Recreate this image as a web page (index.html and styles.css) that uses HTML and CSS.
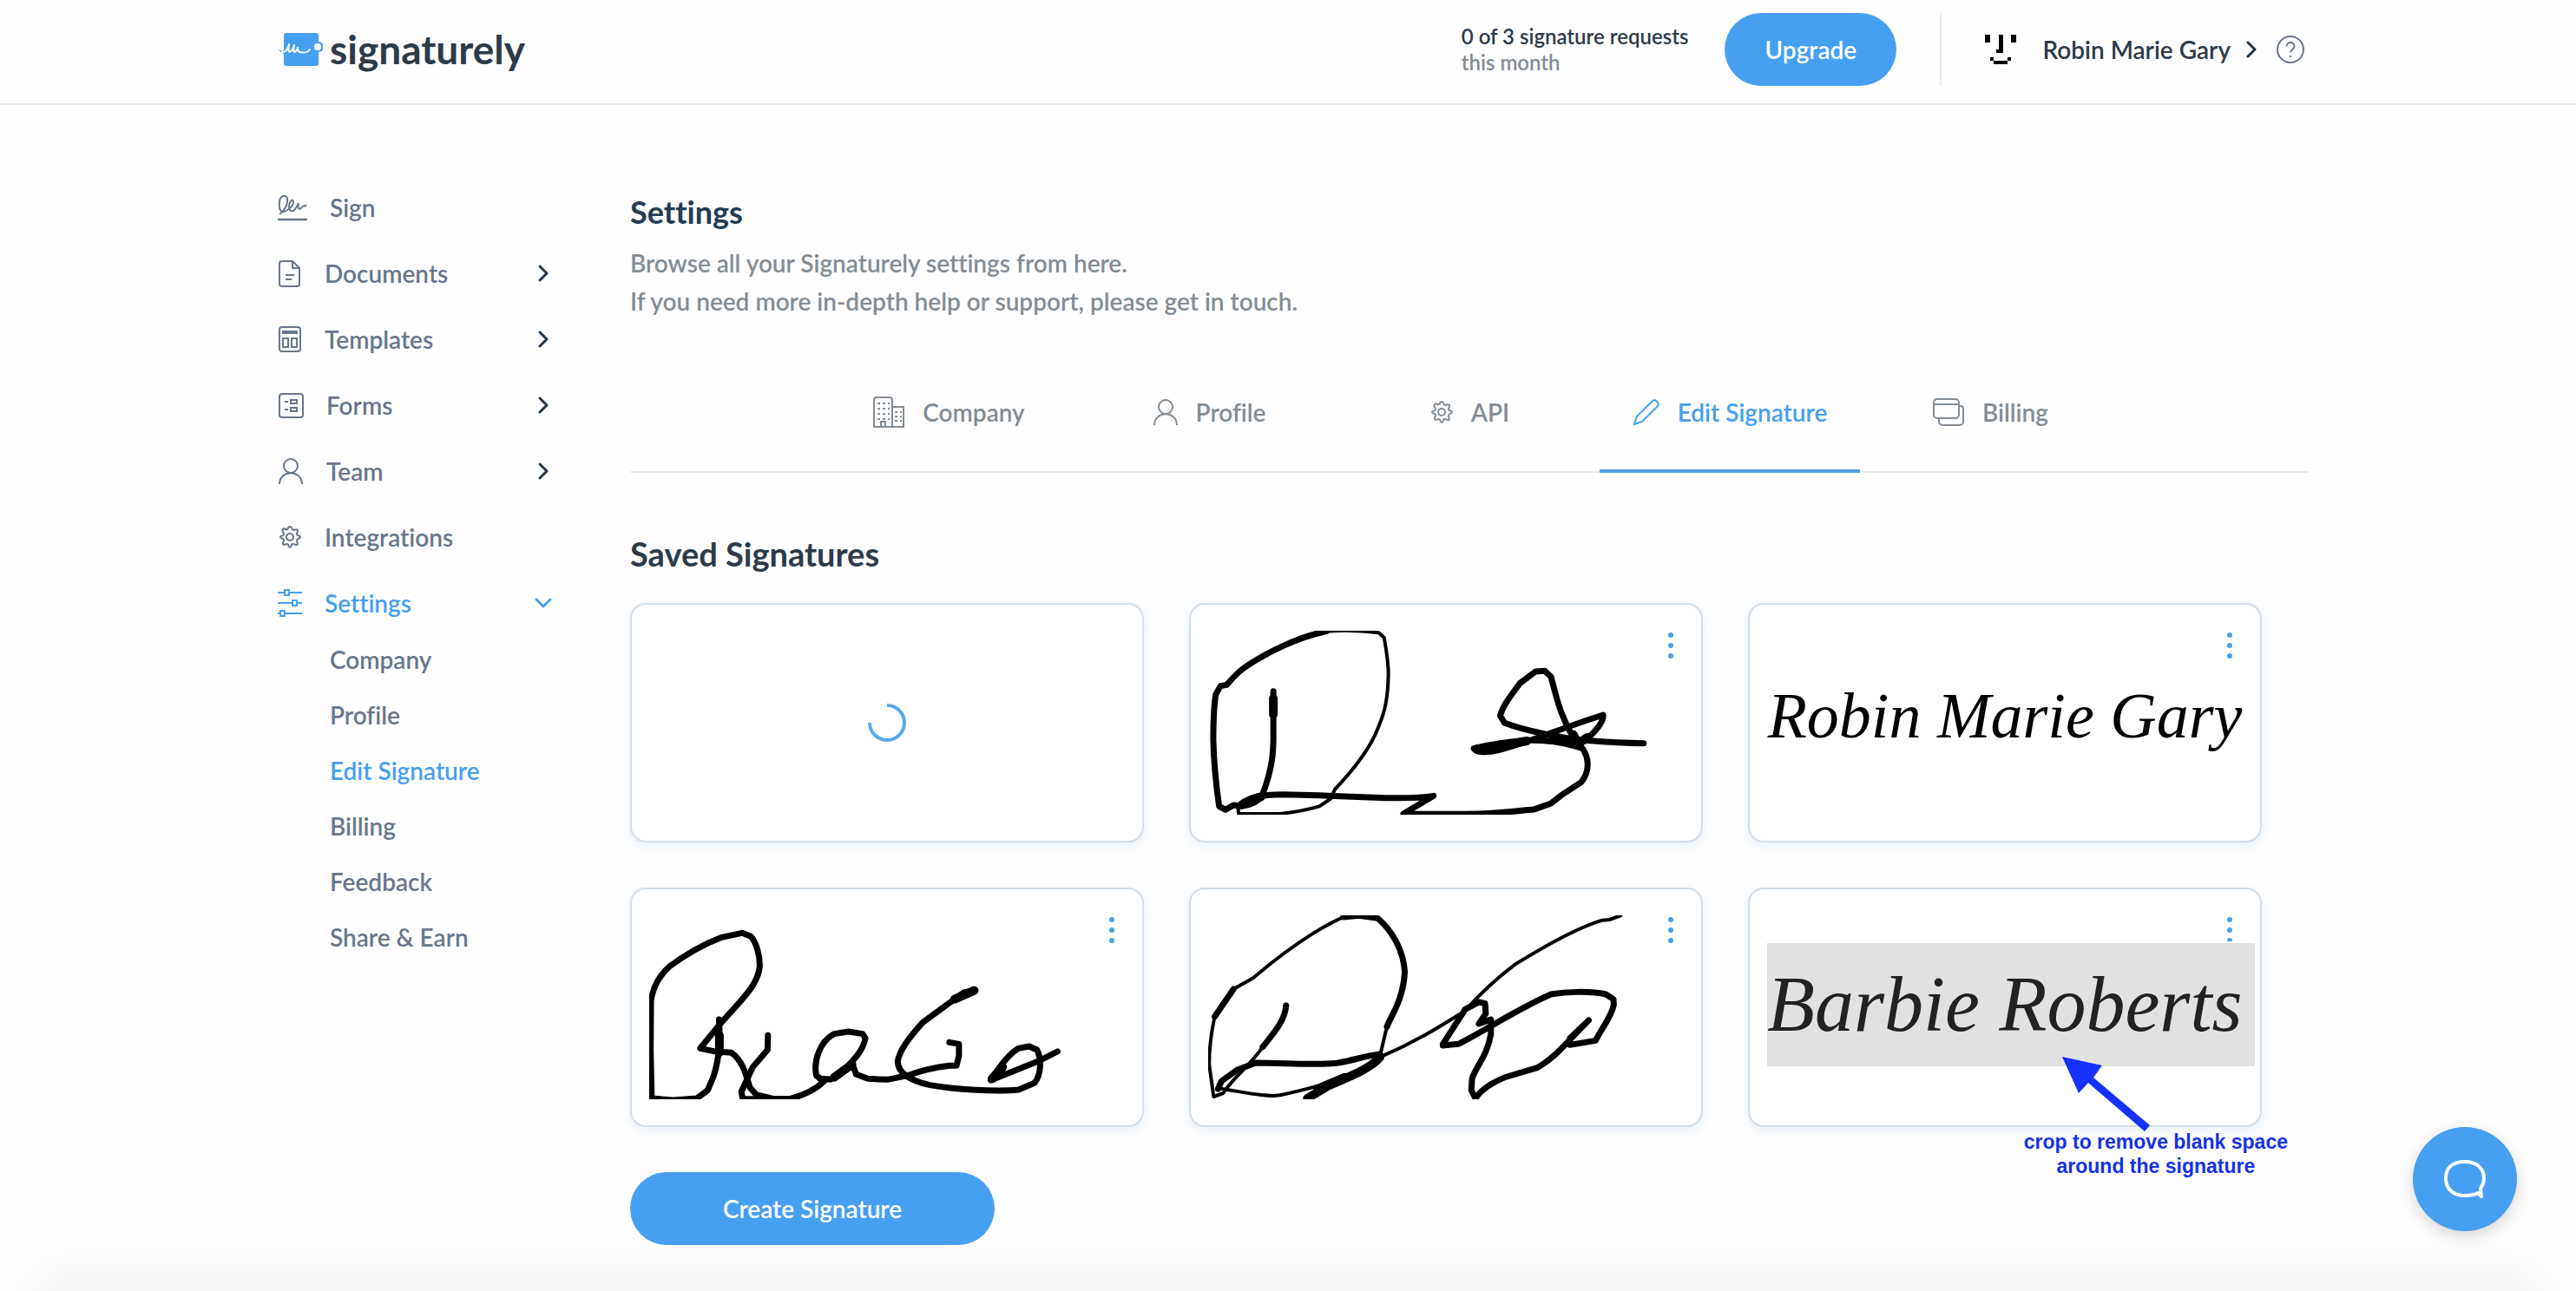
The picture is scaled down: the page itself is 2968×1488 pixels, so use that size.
FILE: index.html
```html
<!DOCTYPE html>
<html lang="en">
<head>
    <meta charset="UTF-8">
    <meta name="viewport" content="width=device-width, initial-scale=1.0">
    <title>Signaturely - Edit Signature</title>
    <link rel="stylesheet" href="styles.css">
</head>
<body>
    <header class="header">
        <div class="container header-inner">
            <a href="#" class="logo">
                <svg width="52" height="40" viewBox="0 0 52 40" fill="none">
                    <path fill="#479ff2" d="M10 1h34a3 3 0 0 1 3 3v7a6 6 0 1 1 0 12v13a3 3 0 0 1-3 3H10a3 3 0 0 1-3-3V25C4 24 2 22 0 19c3 3 5 3 7 2V4a3 3 0 0 1 3-3z"/>
                    <circle cx="46" cy="17" r="4" fill="#fff"/>
                    <path stroke="#fff" stroke-width="2" stroke-linecap="round" stroke-linejoin="round" d="M5 23c5 0 7-4 8-9-1 5-1 8 1 9 2-1 4-4 5-8-1 4-1 8 1 8 2-1 2-3 3-5 0 3 1 5 3 5 3 1 8 1 11-3"/>
                </svg>
                <span>signaturely</span>
            </a>
            <div class="header-right">
                <p class="requests">0 of 3 signature requests<br><span>this month</span></p>
                <button type="button" class="btn btn-upgrade">Upgrade</button>
                <button type="button" class="user-menu">
                    <svg class="avatar" width="36" height="36" viewBox="0 0 36 36" fill="#000">
                        <path d="M0 1h6v9H0zM30 1h6v9h-6zM16 1h5v21h-8v-4h3zM6 27h4v4h16v-4h4v4h-4v4H10v-4H6z"/>
                    </svg>
                    <span>Robin Marie Gary</span>
                    <svg width="12" height="20" viewBox="0 0 12 20" class="chevron"><path d="M2 2l8 8-8 8"/></svg>
                </button>
                <a href="#" class="help" aria-label="Help">
                    <svg width="34" height="34" viewBox="0 0 34 34" class="line-icon">
                        <circle cx="17" cy="17" r="15"/>
                        <path d="M12.500 13.500c0-6 9-6 9 0 0 3.500-4.500 3.500-4.500 7M17 24v2"/>
                    </svg>
                </a>
            </div>
        </div>
    </header>

    <div class="container layout">
        <aside class="sidebar">
            <ul class="menu">
                <li><a href="#">
                    <svg width="34" height="32" viewBox="0 0 34 32" class="line-icon"><path d="M0 30h34" stroke-width="2.500"/><path d="M2 24C8 20 12 12 11 6c-1-5-8-4-9 3-1 8 1 13 5 12 5-1 12-8 11-12-1-3-5 0-5 6 0 4 2 6 5 5 3-2 5-7 6-9-1 5 0 7 1 7 3-1 4-4 5-4s1 2 3-1"/></svg>
                    <span>Sign</span>
                </a></li>
                <li><a href="#">
                    <svg width="28" height="32" viewBox="0 0 28 32" class="line-icon"><path d="M5 2h12l8 8v18a3 3 0 0 1-3 3H5a3 3 0 0 1-3-3V5a3 3 0 0 1 3-3zM17 2v8h8M9 18h10M9 23h7"/></svg>
                    <span>Documents</span>
                    <svg width="12" height="20" viewBox="0 0 12 20" class="chevron"><path d="M2 2l8 8-8 8"/></svg>
                </a></li>
                <li><a href="#">
                    <svg width="28" height="32" viewBox="0 0 28 32" class="line-icon"><rect x="2" y="2" width="24" height="28" rx="3"/><path d="M5 8h18" stroke-width="4"/><path d="M6 15h6v10H6zM16 15h6v10h-6z"/></svg>
                    <span>Templates</span>
                    <svg width="12" height="20" viewBox="0 0 12 20" class="chevron"><path d="M2 2l8 8-8 8"/></svg>
                </a></li>
                <li><a href="#">
                    <svg width="30" height="32" viewBox="0 0 30 32" class="line-icon"><rect x="2" y="3" width="27" height="27" rx="3"/><path d="M8 12h4M8 21h4M15 10h7v4h-7zM15 19h7v4h-7z"/></svg>
                    <span>Forms</span>
                    <svg width="12" height="20" viewBox="0 0 12 20" class="chevron"><path d="M2 2l8 8-8 8"/></svg>
                </a></li>
                <li><a href="#">
                    <svg width="30" height="32" viewBox="0 0 30 32" class="line-icon"><circle cx="15" cy="10" r="8"/><path d="M2 31c0-17 26-17 26 0"/></svg>
                    <span>Team</span>
                    <svg width="12" height="20" viewBox="0 0 12 20" class="chevron"><path d="M2 2l8 8-8 8"/></svg>
                </a></li>
                <li><a href="#">
                    <svg width="28" height="28" viewBox="0 0 28 28" class="line-icon"><circle cx="14" cy="14" r="4"/><path d="M14 2c3 0 2 4 4 4s4-2 5 0-2 3-1 5 4 1 4 3-4 1-4 4 2 4 0 5-3-2-5-1-1 4-3 4-1-4-3-4-4 2-5 0 2-3 1-5-4-1-4-3 4-1 4-3-3-4-1-6 3 1 5 0 0-3 3-3z"/></svg>
                    <span>Integrations</span>
                </a></li>
                <li class="active"><a href="#">
                    <svg width="28" height="32" viewBox="0 0 28 32" class="line-icon"><path d="M0 4h7M14 4h14M0 16h16M23 16h5M0 28h3M9 28h19M8 1h5v6H8zM17 13h5v6h-5zM3 25h5v6H3z"/></svg>
                    <span>Settings</span>
                    <svg width="20" height="12" viewBox="0 0 20 12" class="chevron"><path d="M2 2l8 8 8-8"/></svg>
                </a></li>
            </ul>
            <ul class="submenu">
                <li><a href="#">Company</a></li>
                <li><a href="#">Profile</a></li>
                <li class="active"><a href="#">Edit Signature</a></li>
                <li><a href="#">Billing</a></li>
                <li><a href="#">Feedback</a></li>
                <li><a href="#">Share &amp; Earn</a></li>
            </ul>
        </aside>

        <main class="content">
            <h1>Settings</h1>
            <p class="intro">Browse all your Signaturely settings from here.<br>If you need more in-depth help or support, please get in touch.</p>

            <nav class="tabs">
                <a href="#">
                    <svg width="38" height="36" viewBox="0 0 38 36" class="line-icon"><path d="M2 35V4a3 3 0 0 1 3-3h15a3 3 0 0 1 3 3v31zM23 12h13v23H23M10 35v-6h5v6"/><path stroke-dasharray="3 3" d="M6 8h14M6 14h14M6 20h14M6 26h14M26 18h8M26 23h8M26 28h8"/></svg>
                    Company
                </a>
                <a href="#">
                    <svg width="30" height="32" viewBox="0 0 30 32" class="line-icon"><circle cx="15" cy="10" r="8"/><path d="M2 31c0-17 26-17 26 0"/></svg>
                    Profile
                </a>
                <a href="#">
                    <svg width="28" height="28" viewBox="0 0 28 28" class="line-icon"><circle cx="14" cy="14" r="4"/><path d="M14 2c3 0 2 4 4 4s4-2 5 0-2 3-1 5 4 1 4 3-4 1-4 4 2 4 0 5-3-2-5-1-1 4-3 4-1-4-3-4-4 2-5 0 2-3 1-5-4-1-4-3 4-1 4-3-3-4-1-6 3 1 5 0 0-3 3-3z"/></svg>
                    API
                </a>
                <a href="#" class="active">
                    <svg width="32" height="32" viewBox="0 0 32 32" class="line-icon"><path d="M2 30l3-9L23 3c3-3 9 3 6 6L11 27z"/></svg>
                    Edit Signature
                </a>
                <a href="#">
                    <svg width="38" height="34" viewBox="0 0 38 34" class="line-icon"><rect x="2" y="2" width="29" height="22" rx="4"/><path d="M2 8h29M31 10h2a3 3 0 0 1 3 3v15a4 4 0 0 1-4 4H12a4 4 0 0 1-4-4v-4"/></svg>
                    Billing
                </a>
            </nav>

            <h2>Saved Signatures</h2>
            <div class="signatures">
                <div class="card">
                    <svg class="spinner" width="44" height="44" viewBox="0 0 44 44"><path d="M22 2a20 20 0 1 1-20 20"/></svg>
                </div>
                <div class="card">
                    <svg class="drawing" viewBox="81 141 1386 636" preserveAspectRatio="none">
                        <path class="pen" d="M425 143C350 160 250 215 185 270C160 292 145 315 135 328L117 332L103 362C98 400 96 460 96 520C98 620 106 690 113 748L132 760L155 744L178 748C200 745 225 735 238 712C268 620 272 560 271 495V350"/>
                        <path class="pen thin" d="M425 143C480 138 530 140 578 148L594 165C600 210 608 260 606 300C604 400 590 440 568 500C540 570 490 640 450 690L438 722L405 748C370 760 320 770 290 774H170L168 755"/>
                        <path class="pen thick" d="M271 375V430M180 742C200 725 215 722 235 715M1145 500L1160 532L1185 510M865 550C900 555 950 535 1010 522"/>
                        <path class="pen" d="M180 745C200 715 230 708 300 707C400 710 520 715 600 719C650 720 700 720 738 712L650 774L830 775C920 775 980 765 1033 758L1080 738L1110 710L1168 665C1195 625 1190 580 1172 548C1130 530 1070 518 1010 520C950 525 900 535 855 548C860 565 900 562 930 553C1020 525 1130 470 1232 432C1235 455 1200 510 1160 532C1135 500 1110 430 1098 380L1080 300L1062 280L1035 282L990 322C960 370 940 400 932 435L945 460C1000 485 1100 510 1180 520C1230 525 1300 530 1350 530"/>
                    </svg>
                    <button type="button" class="dots" aria-label="Signature options"><i></i><i></i><i></i></button>
                </div>
                <div class="card">
                    <p class="typed typed-robin">Robin Marie Gary</p>
                    <button type="button" class="dots" aria-label="Signature options"><i></i><i></i><i></i></button>
                </div>
                <div class="card">
                    <svg class="drawing" viewBox="118 135 1342 636" preserveAspectRatio="none">
                        <path class="pen" d="M125 765L122 600L123 430C128 390 145 345 175 312C210 280 260 240 320 212L380 196L405 208C420 230 430 270 430 310C425 370 390 410 370 440L322 505L262 595L300 605L350 610C380 635 390 680 402 730L420 755L470 770H515C560 755 590 735 612 708L590 690C580 640 600 570 640 545L680 537L720 545L728 560C720 610 690 640 660 680L630 702L600 700"/>
                        <path class="pen" d="M315 495C318 560 318 620 300 690L283 740L252 768L185 774L125 768M453 550L452 600L410 660L378 745L382 770H515"/>
                        <path class="pen" d="M690 645L702 685L735 700L790 703L850 688C890 670 930 660 965 655H985L992 620V580L965 574"/>
                        <path class="pen" d="M1037 395L1005 402L890 505C850 560 825 600 819 640C820 680 850 705 910 722C980 738 1100 745 1160 738L1205 715C1225 685 1225 630 1212 600L1190 588L1160 595C1130 615 1100 670 1082 705L1215 640L1270 606"/>
                        <path class="pen thick" d="M316 550V610M690 650L640 695M1035 395L980 425M1085 700L1115 660L1100 690"/>
                    </svg>
                    <button type="button" class="dots" aria-label="Signature options"><i></i><i></i><i></i></button>
                </div>
                <div class="card">
                    <svg class="drawing" viewBox="81 135 1386 636" preserveAspectRatio="none">
                        <path class="pen thin" d="M475 141C400 180 330 240 265 300L212 352L155 390L100 485C90 540 84 600 84 650L97 762L125 750C150 700 200 660 240 590"/>
                        <path class="pen" d="M240 590C270 545 305 500 308 447M155 390L100 485M475 141L520 136L575 145C620 190 650 260 654 330C650 430 610 490 602 520M110 735L120 708L165 670L220 645C300 645 400 655 460 645C510 635 540 620 582 615"/>
                        <path class="pen thin" d="M602 520L582 620M110 733C180 745 250 765 290 757C360 740 480 700 520 680M582 625C680 575 750 525 830 465C870 410 920 355 975 305C1050 250 1150 180 1230 152L1250 150L1283 136"/>
                        <path class="pen thick" d="M582 625C560 660 500 690 430 725L370 768M400 735L480 695"/>
                        <path class="pen" d="M765 580L830 460L870 435L888 440L890 475L870 510L905 495V545C895 620 860 660 850 700L848 740L860 768C880 730 930 700 960 690L1040 662C1100 620 1120 580 1190 498L1135 560V583L1210 568C1230 520 1255 490 1263 445L1262 425L1240 408C1190 395 1120 400 1080 408C980 460 880 540 810 580L765 585"/>
                    </svg>
                    <button type="button" class="dots" aria-label="Signature options"><i></i><i></i><i></i></button>
                </div>
                <div class="card">
                    <button type="button" class="dots" aria-label="Signature options"><i></i><i></i><i></i></button>
                    <p class="typed typed-barbie">Barbie Roberts</p>
                    <div class="note">
                        <svg width="104" height="86" viewBox="0 0 104 86" fill="#1531fb">
                            <path d="M0 0L46 10L36 24L101 79L95 86L30 30L19 42z"/>
                        </svg>
                        <p>crop to remove blank space<br>around the signature</p>
                    </div>
                </div>
            </div>

            <button type="button" class="btn btn-create">Create Signature</button>
        </main>
    </div>

    <button type="button" class="chat" aria-label="Open chat">
        <svg width="52" height="48" viewBox="0 0 52 48"><path d="M41 40C36 43 31 43 26 43C12 43 4 35 4 23S12 4 26 4s22 8 22 19c0 5-2 9-4 12l1 9z"/></svg>
    </button>
    <div class="bottom-shade"></div>
</body>
</html>
```
FILE: styles.css
```css
* {
    margin: 0;
    padding: 0;
    box-sizing: border-box;
}

body {
    font-family: Lato, "Liberation Sans", sans-serif;
    font-size: 28px;
    font-weight: 600;
    font-variant-ligatures: none;
    line-height: 40px;
    color: #2d3a48;
    background: #fefefe;
    min-height: 100vh;
    overflow-x: hidden;
}

a {
    color: inherit;
    text-decoration: none;
}

ul {
    list-style: none;
}

button {
    font: inherit;
    color: inherit;
    border: none;
    background: none;
    cursor: pointer;
}

svg {
    display: block;
    flex-shrink: 0;
}

.container {
    max-width: 2352px;
    margin: 0 auto;
    padding-left: 12px;
}

.line-icon {
    fill: none;
    stroke: currentColor;
    stroke-width: 2;
}

.chevron {
    fill: none;
    stroke: #243447;
    stroke-width: 3;
    stroke-linecap: round;
    stroke-linejoin: round;
}

/* Header */
.header {
    border-bottom: 2px solid #ebecec;
}

.header-inner {
    display: flex;
    align-items: center;
    justify-content: space-between;
    height: 119px;
    padding-bottom: 6px;
}

.logo {
    display: flex;
    align-items: center;
    gap: 8px;
    font-size: 46px;
    font-weight: 700;
    line-height: 60px;
}

.header-right {
    display: flex;
    align-items: center;
}

.requests {
    font-size: 24px;
    line-height: 30px;
    margin-right: 42px;
}

.requests span {
    color: #838c94;
}

.btn {
    height: 84px;
    border-radius: 42px;
    background: #479ff2;
    color: #fff;
}

.btn-upgrade {
    width: 198px;
    margin-right: 50px;
}

.user-menu {
    display: flex;
    align-items: center;
    height: 84px;
    padding-left: 50px;
    border-left: 2px solid #ebecec;
}

.avatar {
    margin-right: 30px;
}

.user-menu .chevron {
    margin-left: 18px;
}

.help {
    margin: 0 4px 0 22px;
    color: #68768b;
}

/* Sidebar */
.layout {
    display: flex;
    padding-top: 98px;
}

.sidebar {
    width: 316px;
    margin-right: 90px;
    flex-shrink: 0;
    color: #68768b;
}

.menu,
.submenu {
    display: flex;
    flex-direction: column;
    gap: 36px;
}

.menu a {
    display: flex;
    align-items: center;
    gap: 26px;
    height: 40px;
}

.menu .chevron {
    margin: 0 4px 0 auto;
}

.submenu {
    gap: 24px;
    margin-top: 25px;
    padding-left: 60px;
}

.active {
    color: #479ff2;
}

.menu .active .chevron {
    margin-right: 0;
    stroke: currentColor;
}

/* Content */
.content {
    flex: 1;
    min-width: 0;
}

h1,
h2 {
    font-size: 36px;
    font-weight: 700;
    line-height: 50px;
}

h1 {
    color: #243b53;
}

.intro {
    margin-top: 12px;
    line-height: 44px;
    color: #838c94;
}

.tabs {
    display: flex;
    justify-content: center;
    margin-top: 36px;
    border-bottom: 2px solid #e9eaea;
    color: #838c94;
}

.tabs a {
    display: flex;
    align-items: center;
    justify-content: center;
    gap: 20px;
    width: 300px;
    height: 140px;
    margin-bottom: -2px;
    padding-top: 4px;
    border-bottom: 4px solid transparent;
}

.tabs .active {
    border-color: #4f9fe6;
}

h2 {
    margin: 68px 0 32px;
    font-size: 38px;
}

.signatures {
    display: grid;
    grid-template-columns: repeat(3, minmax(0, 1fr));
    gap: 52px;
    margin-right: 54px;
}

.card {
    position: relative;
    display: flex;
    align-items: center;
    justify-content: center;
    height: 276px;
    padding: 30px 20px;
    border: 2px solid #d3dfea;
    border-radius: 18px;
    background: #fff;
    box-shadow: 0 4px 12px rgba(71, 159, 242, 0.12);
}

.spinner {
    fill: none;
    stroke: #57a9ee;
    stroke-width: 4;
}

.drawing {
    width: 100%;
    height: 100%;
}

.pen {
    fill: none;
    stroke: #000;
    stroke-width: 7px;
    stroke-linecap: round;
    stroke-linejoin: round;
    vector-effect: non-scaling-stroke;
}

.thin {
    stroke-width: 4px;
}

.thick {
    stroke-width: 10px;
}

.dots {
    position: absolute;
    top: 26px;
    right: 26px;
    display: flex;
    flex-direction: column;
    align-items: center;
    gap: 6px;
    width: 18px;
    padding: 6px 0;
}

.dots i {
    width: 6px;
    height: 6px;
    border-radius: 50%;
    background: #4f9fe6;
}

.typed {
    font-family: "Liberation Serif", serif;
    font-style: italic;
    font-weight: 400;
    white-space: nowrap;
    color: #000;
}

.typed-robin {
    font-size: 74px;
    line-height: 100px;
    padding-bottom: 16px;
}

.typed-barbie {
    position: relative;
    flex: 1;
    height: 142px;
    margin-right: -14px;
    margin-top: -6px;
    font-size: 90px;
    line-height: 142px;
    color: #222;
    background: #e1e1e1;
    box-shadow: 0 0 0 2px #fff;
}

/* Arrow and comment over the last card */
.note {
    position: absolute;
    top: 193px;
    right: -32px;
    display: flex;
    flex-direction: column;
    align-items: center;
    font-family: "Liberation Sans", sans-serif;
    font-size: 23px;
    font-weight: 700;
    line-height: 28px;
    text-align: center;
    white-space: nowrap;
    color: #1531e8;
}

.note svg {
    margin-right: 112px;
    margin-bottom: -2px;
}

.btn-create {
    width: 420px;
    margin: 52px 0;
}

.chat {
    position: fixed;
    right: 68px;
    bottom: 69px;
    display: flex;
    align-items: center;
    justify-content: center;
    width: 120px;
    height: 120px;
    border-radius: 50%;
    background: #479ff2;
    box-shadow: 0 6px 18px rgba(0, 0, 0, 0.16);
}

.chat svg {
    fill: none;
    stroke: #fff;
    stroke-width: 4;
    stroke-linejoin: round;
}

/* Soft shade along the lower window edge */
.bottom-shade {
    position: fixed;
    left: 50px;
    right: 50px;
    bottom: -20px;
    height: 20px;
    box-shadow: 0 0 60px rgba(0, 0, 0, 0.14);
    pointer-events: none;
}
```
